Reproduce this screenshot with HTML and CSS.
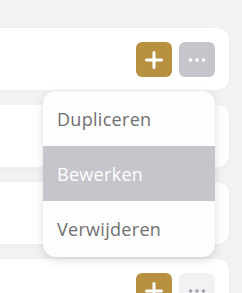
FILE: index.html
```html
<!DOCTYPE html>
<html lang="nl">
<head>
<meta charset="UTF-8">
<meta name="viewport" content="width=device-width, initial-scale=1.0">
<title>Items</title>
<link rel="stylesheet" href="styles.css">
</head>
<body>
<div class="list">
    <div class="card">
        <div class="actions">
            <button class="btn btn-add" aria-label="Toevoegen">
                <svg width="18" height="18" viewBox="0 0 18 18"><path d="M9 1.5v15M1.5 9h15" stroke="#fff" stroke-width="3" stroke-linecap="round"/></svg>
            </button>
            <button class="btn btn-more active" aria-label="Meer">
                <svg width="18" height="4" viewBox="0 0 18 4"><circle cx="2.5" cy="2" r="1.8"/><circle cx="9" cy="2" r="1.8"/><circle cx="15.5" cy="2" r="1.8"/></svg>
            </button>
        </div>
    </div>
    <div class="card"></div>
    <div class="card"></div>
    <div class="card">
        <div class="actions">
            <button class="btn btn-add" aria-label="Toevoegen">
                <svg width="18" height="18" viewBox="0 0 18 18"><path d="M9 1.5v15M1.5 9h15" stroke="#fff" stroke-width="3" stroke-linecap="round"/></svg>
            </button>
            <button class="btn btn-more" aria-label="Meer">
                <svg width="18" height="4" viewBox="0 0 18 4"><circle cx="2.5" cy="2" r="1.8"/><circle cx="9" cy="2" r="1.8"/><circle cx="15.5" cy="2" r="1.8"/></svg>
            </button>
        </div>
    </div>

    <ul class="menu">
        <li>Dupliceren</li>
        <li class="selected">Bewerken</li>
        <li>Verwijderen</li>
    </ul>
</div>
</body>
</html>
```

FILE: styles.css
```css
body {
    margin: 0;
    background-color: #f2f2f5;
    font-family: "Open Sans", "Noto Sans", sans-serif;
    overflow: hidden;
}

.list {
    position: relative;
    display: flex;
    flex-direction: column;
    gap: 15px;
    padding: 28px 13px 0 0;
    margin-left: -20px;
}

.card {
    height: 62px;
    background-color: #fff;
    border-radius: 12px;
    box-shadow: 0 1px 4px rgba(0, 0, 0, 0.03);
    display: flex;
    justify-content: flex-end;
    align-items: flex-start;
    padding: 14px 14px 0 0;
    box-sizing: border-box;
}

.actions {
    display: flex;
    gap: 7px;
}

.btn {
    width: 36px;
    height: 35px;
    border: none;
    border-radius: 6px;
    padding: 0;
    display: flex;
    align-items: center;
    justify-content: center;
    cursor: pointer;
}

.btn-add {
    background-color: #b89140;
}

.btn-more {
    background-color: #f2f2f5;
    fill: #a3a3ab;
}

.btn-more.active {
    background-color: #c6c5cb;
    fill: #fff;
}

.menu {
    position: absolute;
    left: 63px;
    top: 91px;
    width: 172px;
    margin: 0;
    padding: 0;
    list-style: none;
    background-color: #fdfdfd;
    border-radius: 13px;
    overflow: hidden;
    box-shadow: 0 3px 10px rgba(0, 0, 0, 0.13);
}

.menu li {
    height: 55px;
    display: flex;
    align-items: center;
    padding-left: 14px;
    font-size: 18px;
    letter-spacing: 0.3px;
    color: #707070;
}

.menu li:last-child {
    height: 56px;
}

.menu li.selected {
    background-color: #c6c5cb;
    color: #fff;
}
```
